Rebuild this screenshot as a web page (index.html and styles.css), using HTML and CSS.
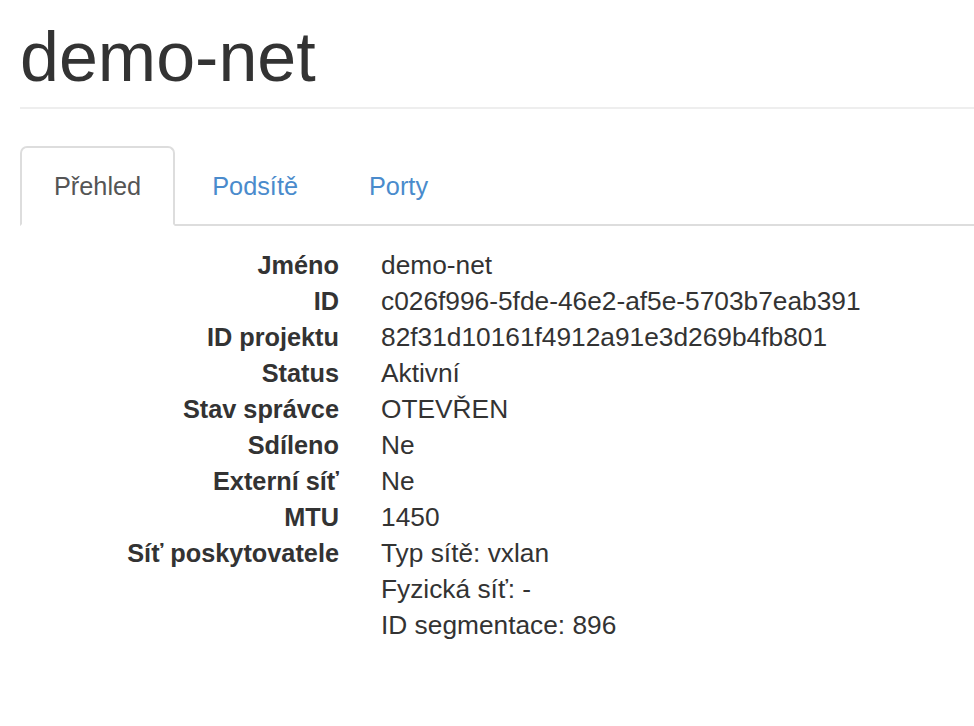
FILE: index.html
```html
<!DOCTYPE html>
<html lang="cs">
<head>
<meta charset="utf-8">
<title>demo-net</title>
<link rel="stylesheet" href="styles.css">
</head>
<body>
<div class="page">
  <header class="page-header">
    <h1 class="title">demo-net</h1>
  </header>
  <ul class="tabs">
    <li class="tab active"><a>Přehled</a></li>
    <li class="tab"><a>Podsítě</a></li>
    <li class="tab"><a>Porty</a></li>
  </ul>
  <dl class="details">
    <dt>Jméno</dt><dd>demo-net</dd>
    <dt>ID</dt><dd>c026f996-5fde-46e2-af5e-5703b7eab391</dd>
    <dt>ID projektu</dt><dd>82f31d10161f4912a91e3d269b4fb801</dd>
    <dt>Status</dt><dd>Aktivní</dd>
    <dt>Stav správce</dt><dd>OTEVŘEN</dd>
    <dt>Sdíleno</dt><dd>Ne</dd>
    <dt>Externí síť</dt><dd>Ne</dd>
    <dt>MTU</dt><dd>1450</dd>
    <dt>Síť poskytovatele</dt>
    <dd>
      <div>Typ sítě: vxlan</div>
      <div>Fyzická síť: -</div>
      <div>ID segmentace: 896</div>
    </dd>
  </dl>
</div>
</body>
</html>
```

FILE: styles.css
```css
html, body {
  margin: 0;
  padding: 0;
  background: #fff;
}
body {
  font-family: "Liberation Sans", Arial, Helvetica, sans-serif;
  color: #333;
  font-size: 25px;
  line-height: 36px;
}
.page {
  padding: 0 0 0 20px;
}
.page-header {
  padding-top: 21px;
  padding-bottom: 14px;
  border-bottom: 2px solid #eee;
}
.title {
  margin: 0;
  font-size: 70px;
  font-weight: 400;
  line-height: 72px;
  color: #333;
}
.tabs {
  list-style: none;
  margin: 37px 0 0 0;
  padding: 0;
  display: flex;
  border-bottom: 2px solid #ddd;
  font-size: 25.3px;
}
.tab {
  margin-right: 3px;
  margin-bottom: -2px;
}
.tab a {
  display: block;
  padding: 20px 32px 20px 32px;
  border: 2px solid transparent;
  border-radius: 7px 7px 0 0;
  color: #4a8bcc;
  line-height: 36px;
}
.tab.active a {
  color: #555;
  border-color: #ddd;
  border-bottom-color: #fff;
  background: #fff;
}
.details {
  margin: 21px 0 0 0;
  display: grid;
  grid-template-columns: 319px 1fr;
  column-gap: 42px;
}
.details dt {
  font-weight: 700;
  text-align: right;
  font-size: 25.3px;
}
.details dd {
  margin: 0;
  font-size: 26.3px;
}
```
